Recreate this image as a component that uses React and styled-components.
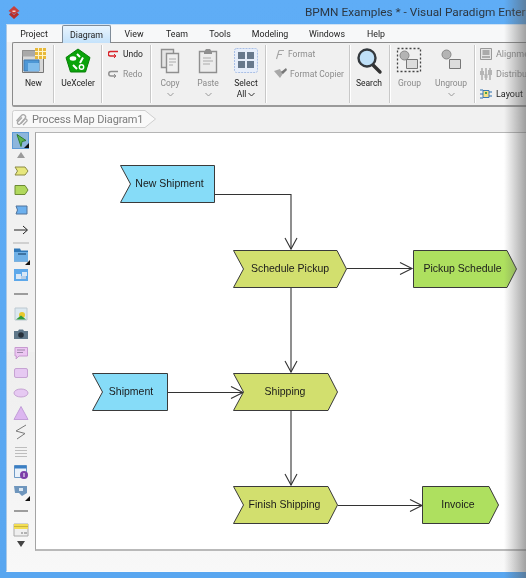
import React from "react";
import styled, { createGlobalStyle } from "styled-components";

const Global = createGlobalStyle`
  html, body { margin: 0; padding: 0; background: #5aa9f4; }
  * { box-sizing: border-box; }
`;

const Frame = styled.div`
  position: relative;
  width: 526px;
  height: 578px;
  overflow: hidden;
  display: flex;
  flex-direction: column;
  background: linear-gradient(#5fadf6, #58a6f0);
  font-family: Roboto, "Liberation Sans", sans-serif;
  filter: blur(0.3px);
`;
const TitleBar = styled.header`
  height: 24px;
  flex: none;
  display: flex;
  align-items: center;
  padding-left: 8px;
  svg { flex: none; }
`;
const Title = styled.h1`
  margin: 0 0 0 285px;
  flex: none;
  font: 400 11.8px Roboto, sans-serif;
  color: #2c3742;
  white-space: nowrap;
`;
const Window = styled.div`
  flex: 1;
  min-height: 0;
  margin: 0 0 6px 6px;
  display: flex;
  flex-direction: column;
  background: #f1f1f1;
  border-left: 1px solid #a9c9e8;
  border-bottom: 1px solid #fafafa;
  border-top: 1px solid #cfe2f4;
`;
const TabRow = styled.nav`
  height: 17px;
  flex: none;
  display: flex;
  background: #f7f8f9;
  padding-left: 5px;
  align-items: stretch;
`;
const Tab = styled.div`
  width: ${p => p.$w}px;
  flex: none;
  display: flex;
  align-items: center;
  justify-content: center;
  padding-right: ${p => p.$pr || 0}px;
  font-size: 8.8px;
  color: #222;
  position: relative;
  z-index: 1;
  ${p => p.$active && `
    background: linear-gradient(#e9f4fd, #c4e2fb);
    border: 1px solid #7f8c99;
    border-bottom: none;
    border-radius: 2px 2px 0 0;
    height: 18px;
  `}
`;
const Ribbon = styled.section`
  height: 65px;
  flex: none;
  margin-left: 5px;
  display: flex;
  padding: 2px 0 2px 0;
  background: #f0f0f0;
  border: 1px solid #8a8a8a;
  border-right: none;
  border-bottom: 2px solid #9a9a9a;
  border-radius: 2px 0 0 2px;
`;
const Group = styled.div`
  width: ${p => p.$w}px;
  flex: none;
  display: flex;
  padding-left: ${p => p.$pad || 0}px;
  border-right: ${p => (p.$last ? "none" : "1px solid #c8c8c8")};
  box-shadow: ${p => (p.$last ? "none" : "1px 0 0 #fff")};
  ${p => p.$column && "flex-direction: column; padding-top: 0;"}
`;
const LargeButton = styled.div`
  width: ${p => p.$w}px;
  flex: none;
  display: flex;
  flex-direction: column;
  align-items: center;
  font-size: 8.5px;
  line-height: 11px;
  color: ${p => (p.$off ? "#8a8a8a" : "#222")};
  padding-top: 2px;
  text-align: center;
  svg.big { display: block; flex: none; height: 29px; margin-bottom: 2px; }
`;
const Chevron = styled.svg`
  display: block;
  flex: none;
  width: 7px;
  height: 5px;
  margin: 3px auto 0;
`;
const InlineChevron = styled.svg`
  display: inline-block;
  width: 7px;
  height: 5px;
  margin-left: 2px;
  vertical-align: 0;
`;
const SmallButton = styled.div`
  height: 20px;
  flex: none;
  margin-top: ${p => (p.$first ? -1 : 0)}px;
  display: flex;
  align-items: center;
  gap: ${p => p.$gap || 4}px;
  font-size: 8.5px;
  color: ${p => (p.$off ? "#8c8c8c" : "#222")};
  white-space: nowrap;
  svg { flex: none; }
`;
const SideButton = styled(SmallButton)`
  gap: 4px;
  font-size: 9px;
`;
const CrumbRow = styled.div`
  height: 26px;
  flex: none;
  padding: 3px 0 0 5px;
`;
const Crumb = styled.div`
  position: relative;
  width: 145px;
  height: 18px;
  display: flex;
  align-items: center;
  gap: 4px;
  padding-left: 3px;
  font: 400 11px Roboto, sans-serif;
  letter-spacing: -0.15px;
  color: #7c7c7c;
  white-space: nowrap;
  svg.edge { position: absolute; left: 0; top: 0; }
  svg.clip, span { position: relative; }
`;
const Main = styled.div`
  flex: 1;
  min-height: 0;
  display: flex;
`;
const ToolBar = styled.aside`
  width: 28px;
  flex: none;
  padding: 0 0 0 5px;
  margin-top: -1px;
  display: flex;
  flex-direction: column;
`;
const Slot = styled.div`
  height: ${p => p.$h}px;
  width: 17px;
  flex: none;
  display: flex;
  align-items: center;
  justify-content: center;
  position: relative;
  svg { flex: none; }
  ${p => p.$on && `
    background: #8db6dc;
    border: 1px solid #5d9ad6;
  `}
`;
const Corner = styled.i`
  position: absolute;
  right: -1px;
  bottom: 0;
  width: 0;
  height: 0;
  border-style: solid;
  border-width: 0 0 5px 5px;
  border-color: transparent transparent #111 transparent;
`;
const Canvas = styled.main`
  position: relative;
  flex: 1;
  height: 419px;
  margin-top: -1px;
  background: #fff;
  border: 1px solid #b5b5b5;
  border-left-color: #a4a4a4;
  border-right: none;
  border-bottom: 2px solid #b9b9b9;
`;
const Wires = styled.svg`
  position: absolute;
  left: -36px;
  top: -133px;
  width: 526px;
  height: 578px;
  pointer-events: none;
`;
const Node = styled.div`
  position: absolute;
  left: ${p => p.$x - 36}px;
  top: ${p => p.$y - 133}px;
  width: ${p => p.$w}px;
  height: 38px;
  display: flex;
  align-items: center;
  justify-content: center;
  padding-left: ${p => (p.$dx > 0 ? p.$dx : 0)}px;
  padding-right: ${p => (p.$dx < 0 ? -p.$dx : 0)}px;
  padding-bottom: 2px;
  font: 400 10.5px "Liberation Sans", sans-serif;
  color: #1a1a1a;
  white-space: nowrap;
  svg { position: absolute; left: 0; top: 0; overflow: visible; }
  span { position: relative; }
`;
const StatusBar = styled.footer`
  flex: 1;
  background: linear-gradient(#eeeeee, #f8f8f8);
`;
const Fade = styled.div`
  position: absolute;
  right: 0;
  top: 0;
  bottom: 0;
  width: 22px;
  background: linear-gradient(90deg, rgba(90,90,90,0), rgba(90,90,90,.22) 40%, rgba(90,90,90,.55));
  pointer-events: none;
`;

const Big = ({ children }) => (
  <svg className="big" width="30" height="29" viewBox="0 0 30 29">{children}</svg>
);
const Down = ({ off }) => (
  <Chevron viewBox="0 0 7 5"><path d="M.5 1l3 3 3-3" fill="none" stroke={off ? "#999" : "#333"} strokeWidth="1" /></Chevron>
);

const Logo = () => (
  <svg width="12" height="13" viewBox="0 0 12 13">
    <path d="M6 0l5.500 5L6 8.500.5 5z" fill="#c9403c" />
    <path d="M3 6.500L6 9l3-2.500 2 2L6 13 1 8.500z" fill="#b52f2c" />
    <path d="M4.500 4.500h3v1.500h-3z" fill="#f6d0cc" />
  </svg>
);
const NewIcon = () => (
  <Big>
    <path d="M3.500 3.500h21v22h-21z" fill="#d8d8d8" stroke="#777" />
    <path d="M3.500 3.500h21v6h-21z" fill="#a9a9a9" />
    <path d="M5 13h15v11H5z" fill="#4d97d6" stroke="#4179ad" />
    <path d="M9 16h11v8H9z" fill="#7fbcec" />
    <path d="M16 1h11v11H16z" fill="#e8b93a" />
    <path d="M19.500 1v11M23.500 1v11M16 4.500h11M16 8.500h11" stroke="#fff4c9" />
  </Big>
);
const UeIcon = () => (
  <Big>
    <path d="M15 2l12 8.500-4.500 14.500h-15L3 10.500z" fill="#0aa30a" stroke="#087f08" />
    <ellipse cx="10" cy="11.500" rx="3.300" ry="2.200" fill="#fff" />
    <path d="M14 7l3 3M20 10.500l-3 5.500M10 18l4 4" stroke="#fff" strokeWidth="2" />
    <circle cx="18.500" cy="20" r="2.200" fill="none" stroke="#fff" strokeWidth="1.400" />
  </Big>
);
const CopyIcon = () => (
  <Big>
    <path d="M6.500 2.500h12v18h-12z" fill="#e4e4e4" stroke="#8f8f8f" strokeWidth="1.400" />
    <path d="M11.500 6.500h12v19h-12z" fill="#f0f0f0" stroke="#8f8f8f" strokeWidth="1.400" />
    <path d="M14 12h7M14 15h7M14 18h4" stroke="#aaa" />
  </Big>
);
const PasteIcon = () => (
  <Big>
    <path d="M6.500 4.500h17v21h-17z" fill="#ececec" stroke="#8f8f8f" strokeWidth="1.400" />
    <path d="M11 5l2-3h4l2 3v2h-8z" fill="#8f8f8f" />
    <path d="M10 11h8M10 14h10M10 17h7" stroke="#aaa" />
  </Big>
);
const SelectIcon = () => (
  <Big>
    <rect x="3.500" y="1.500" width="23" height="24" rx="2" fill="#e7eefa" stroke="#a9bfe6" strokeDasharray="2 1" />
    <path d="M7 5h7v7H7zM16 5h7v7h-7zM7 14h7v7H7zM16 14h7v7h-7z" fill="#68798c" />
  </Big>
);
const SearchIcon = () => (
  <Big>
    <path d="M19 18l7 7" stroke="#333" strokeWidth="3.400" strokeLinecap="round" />
    <circle cx="13" cy="11" r="8.500" fill="#bfe0f8" stroke="#34393e" strokeWidth="2.400" />
  </Big>
);
const GroupIcon = () => (
  <Big>
    <rect x="2.500" y="1.500" width="23" height="23" fill="none" stroke="#444" strokeWidth="1.300" strokeDasharray="2 2" />
    <circle cx="9.500" cy="8.500" r="4.500" fill="#b4b4b4" stroke="#888" />
    <path d="M11.500 12.500h11v9h-11z" fill="#dcdcdc" stroke="#777" />
  </Big>
);
const UngroupIcon = () => (
  <Big>
    <circle cx="10.500" cy="7.500" r="4.500" fill="#b4b4b4" stroke="#888" />
    <path d="M13.500 12.500h11v9h-11z" fill="#dcdcdc" stroke="#777" />
  </Big>
);
const Undo = () => (
  <svg width="11" height="10" viewBox="0 0 11 10"><path d="M10 2.500H2.500a2.200 2.200 0 0 0 0 4.500H8" fill="none" stroke="#d8232a" strokeWidth="1.500" /><path d="M8 7L6 5M8 7L6 9" stroke="#d8232a" fill="none" /></svg>
);
const Redo = () => (
  <svg width="11" height="10" viewBox="0 0 11 10"><path d="M10 2.500H3A2.200 2.200 0 0 0 3 7h5" fill="none" stroke="#909090" strokeWidth="1.500" /><path d="M8 7L6 5M8 7L6 9" stroke="#909090" fill="none" /></svg>
);
const FormatIc = () => (
  <svg width="12" height="11" viewBox="0 0 12 11"><path d="M6 1.500h5M6 1.500L3.500 10M5 5.500h4" fill="none" stroke="#a5a5a5" strokeWidth="1.100" /></svg>
);
const CopierIc = () => (
  <svg width="15" height="12" viewBox="0 0 15 12"><path d="M1 3l6 7 4-6-3-1-1-2z" fill="#a8a8a8" /><path d="M8 4l5-4 1 2-4 4z" fill="#777" /></svg>
);
const AlignIc = () => (
  <svg width="12" height="12" viewBox="0 0 12 12"><path d="M.5.500h11v11H.5z" fill="#e4e4e4" stroke="#999" /><path d="M2.500 2h7v5h-7z" fill="#aaa" /><path d="M2 9h8" stroke="#777" /></svg>
);
const DistIc = () => (
  <svg width="12" height="12" viewBox="0 0 12 12"><path d="M2 0v12M6 0v12M10 0v12" stroke="#8a8a8a" /><path d="M0 3h4v4H0zM4.500 6h3v4h-3zM8 2h4v5H8z" fill="#b5b5b5" /></svg>
);
const LayoutIc = () => (
  <svg width="12" height="12" viewBox="0 0 12 12"><path d="M3 2.500h6v7H3z" fill="#f5e083" stroke="#3b78b5" /><path d="M0 2h3M0 6h3M0 10h3M9 4h3M9 8h3" stroke="#2d6fad" /><path d="M5 4h2v2H5z" fill="#4aa04a" /></svg>
);
const Clip = () => (
  <svg className="clip" width="13" height="13" viewBox="0 0 13 13" fill="none" stroke="#a8a8a8" strokeWidth="1.300"><path d="M1.500 8l5-5.500a2.300 2.300 0 0 1 3.500 3L5 11a1.600 1.600 0 0 1-2.400-2L7 4.500" /><path d="M6 10.500l4-4.500a1.600 1.600 0 0 1 2 2l-4 4" /></svg>
);

const tools = [
  ["sel", 17], ["up", 13], ["yellow", 18], ["green", 20], ["blue", 20], ["arrow", 20], ["sep", 5], ["folder", 20], ["pool", 19], ["line", 20], ["image", 20], ["camera", 19],
  ["comment", 20], ["rect", 19], ["ellipse", 21], ["tri", 19], ["zig", 20], ["lines", 20], ["info", 19], ["callout", 20], ["line", 20], ["note", 18], ["down", 12],
];
const ToolIcon = ({ kind }) => {
  const g = {
    sel: <path d="M4 1.500l9 6-4 1-1 5z" fill="#5fb552" stroke="#2e7d32" />,
    up: <path d="M8 4l4 6H4z" fill="#9a9a9a" />,
    yellow: <path d="M2 4h10l3 4-3 4H2l2.500-4z" fill="#e7e77c" stroke="#8b8b45" />,
    green: <path d="M2 3.500h10l3 4.500-3 4.500H2z" fill="#b1d85c" stroke="#6c8a35" />,
    blue: <path d="M3 4h11v8H3l1.500-4z" fill="#6cb0ee" stroke="#50739a" />,
    arrow: <g fill="none" stroke="#222"><path d="M1 8h13" /><path d="M10 4l4.500 4-4.500 4" /></g>,
    sep: <path d="M0 8h16" stroke="#c4c4c4" strokeWidth="1.500" />,
    folder: <g><path d="M1 1.500h6l1 2h7v11H1z" fill="#2f78b8" /><path d="M1 5h14v9.500H1z" fill="#6fb0e6" /><path d="M5 7h8" stroke="#24527c" strokeWidth="1.300" /></g>,
    pool: <g><path d="M1 2h14v12H1z" fill="#5da8ea" /><path d="M3 7h5v5H3zM9 5h5v4H9z" fill="#d8e7f6" /><path d="M8 9h5v3H8z" fill="#b7cee6" /></g>,
    line: <path d="M1 8h14" stroke="#777" strokeWidth="1.400" />,
    image: <g><path d="M2 2h12v12H2z" fill="#dce8f0" stroke="#bcc8d0" /><circle cx="9" cy="9" r="3" fill="#e8c82e" /><path d="M3 13.500l5-4 5 4z" fill="#2f9a3c" /></g>,
    camera: <g><path d="M1 5h4l1-1.500h4L11 5h4v8H1z" fill="#5f7789" /><circle cx="8" cy="9" r="2.800" fill="#26303a" /></g>,
    comment: <g><path d="M2 2.500h12.500v8.500H6l-3 3 .5-3H2z" fill="#ecc6f2" stroke="#c79ad0" /><path d="M4 5h8M4 7.500h6" stroke="#9c88a8" /></g>,
    rect: <rect x="1.500" y="3.500" width="13" height="9" rx="1.500" fill="#e6c9f2" stroke="#c6a3d3" />,
    ellipse: <ellipse cx="8" cy="8" rx="7" ry="4" fill="#e6c9f2" stroke="#c6a3d3" />,
    tri: <path d="M8 1.500l7 13H1z" fill="#dcb6f0" stroke="#c29ed8" />,
    zig: <path d="M13 1L3 7l9 2.500L4 15" fill="none" stroke="#7b7b7b" />,
    lines: <path d="M2 3.500h12M2 6.500h12M2 9.500h12M2 12.500h12" stroke="#bdbdbd" />,
    info: <g><path d="M1.500 1.500h12v12h-12z" fill="#e9f1fa" stroke="#6f9ac6" /><path d="M1.500 1.500h12v3h-12z" fill="#3a7fc4" /><circle cx="11" cy="11" r="4" fill="#7b3fa8" /><path d="M11 9v4" stroke="#fff" /></g>,
    callout: <g><path d="M1 3h13v7l-5 3-3-3H2z" fill="#6f96bd" /><path d="M6 5h4v3H6z" fill="#dbe8f4" /></g>,
    note: <g><path d="M1 2h14v12H1z" fill="#efefef" stroke="#aaa" /><path d="M1 2h14v5H1z" fill="#f2dd55" /><path d="M1 4.500h14" stroke="#c9b53a" /><path d="M8 11h2M11 11h3" stroke="#777" /></g>,
    down: <path d="M4 4h8l-4 6z" fill="#444" />,
  }[kind];
  return <svg width="16" height="16" viewBox="0 0 16 16">{g}</svg>;
};

const nodes = [
  { x: 120, y: 165, w: 95, text: "New Shipment", fill: "#86dcf8", dx: 4, d: "M.5.500H94.500V37.500H.5L10.500 19z" },
  { x: 92, y: 373, w: 76, text: "Shipment", fill: "#86dcf8", dx: 2, d: "M.5.500H75.500V37.500H.5L10.500 19z" },
  { x: 233, y: 250, w: 114, text: "Schedule Pickup", fill: "#d2df6e", d: "M.5.500H104L113.500 19 104 37.500H.5L10.500 19z" },
  { x: 233, y: 373, w: 105, text: "Shipping", fill: "#d2df6e", dx: -1, d: "M.5.500H95L104.500 19 95 37.500H.5L10.500 19z" },
  { x: 233, y: 486, w: 105, text: "Finish Shipping", fill: "#d2df6e", dx: -2, d: "M.5.500H95L104.500 19 95 37.500H.5L10.500 19z" },
  { x: 413, y: 250, w: 104, text: "Pickup Schedule", fill: "#aee05f", dx: -5, d: "M.5.500H94L103.500 19 94 37.500H.5z" },
  { x: 422, y: 486, w: 77, text: "Invoice", fill: "#aee05f", dx: -5, d: "M.5.500H67L76.500 19 67 37.500H.5z" },
];
const wires = [
  { d: "M215 194.500H291V249", tip: [291, 249, "v"] },
  { d: "M347 268.500H412", tip: [412, 268.500, "h"] },
  { d: "M291 288V372", tip: [291, 372, "v"] },
  { d: "M168 392.500H243", tip: [243, 392.500, "h"] },
  { d: "M291 411V485", tip: [291, 485, "v"] },
  { d: "M338 505.500H422", tip: [422, 505.500, "h"] },
];
const tipPath = ([x, y, dir]) =>
  dir === "v" ? `M${x - 6} ${y - 11}L${x} ${y}L${x + 6} ${y - 11}` : `M${x - 12} ${y - 6}L${x} ${y}L${x - 12} ${y + 6}`;

export default function App() {
  return (
    <Frame>
      <Global />
      <TitleBar>
        <Logo />
        <Title>BPMN Examples * - Visual Paradigm Enterp</Title>
      </TitleBar>
      <Window>
        <TabRow>
          <Tab $w={50} $pr={6}>Project</Tab>
          <Tab $w={49} $active>Diagram</Tab>
          <Tab $w={46}>View</Tab>
          <Tab $w={40}>Team</Tab>
          <Tab $w={46}>Tools</Tab>
          <Tab $w={54}>Modeling</Tab>
          <Tab $w={60}>Windows</Tab>
          <Tab $w={38}>Help</Tab>
        </TabRow>
        <Ribbon>
          <Group $w={41}><LargeButton $w={41}><NewIcon />New</LargeButton></Group>
          <Group $w={48}><LargeButton $w={48}><UeIcon />UeXceler</LargeButton></Group>
          <Group $w={49} $column $pad={6}>
            <SmallButton $first><Undo />Undo</SmallButton>
            <SmallButton $off><Redo />Redo</SmallButton>
          </Group>
          <Group $w={115}>
            <LargeButton $w={38} $off><CopyIcon />Copy<Down off /></LargeButton>
            <LargeButton $w={38} $off><PasteIcon />Paste<Down off /></LargeButton>
            <LargeButton $w={38}><SelectIcon />Select<span>All<InlineChevron viewBox="0 0 7 5"><path d="M.5 1l3 3 3-3" fill="none" stroke="#333" /></InlineChevron></span></LargeButton>
          </Group>
          <Group $w={84} $column $pad={7}>
            <SmallButton $first $off $gap={3}><FormatIc />Format</SmallButton>
            <SmallButton $off $gap={2}><CopierIc />Format Copier</SmallButton>
          </Group>
          <Group $w={40}><LargeButton $w={38}><SearchIcon />Search</LargeButton></Group>
          <Group $w={85}>
            <LargeButton $w={39} $off><GroupIcon />Group</LargeButton>
            <LargeButton $w={44} $off><UngroupIcon />Ungroup<Down off /></LargeButton>
          </Group>
          <Group $w={50} $column $pad={5} $last>
            <SideButton $first $off><AlignIc />Alignme</SideButton>
            <SideButton $off><DistIc />Distribu</SideButton>
            <SideButton><LayoutIc />Layout</SideButton>
          </Group>
        </Ribbon>
        <CrumbRow>
          <Crumb>
            <svg className="edge" width="145" height="18" viewBox="0 0 145 18">
              <path d="M.5 2.500Q.5.500 2.500.500H133L143.500 9 133 17.500H.5z" fill="#f9f9f9" stroke="#cfcfcf" />
            </svg>
            <Clip />
            <span>Process Map Diagram1</span>
          </Crumb>
        </CrumbRow>
        <Main>
          <ToolBar>
            {tools.map(([k, h], i) => (
              <Slot key={i} $h={h} $on={k === "sel"}>
                <ToolIcon kind={k} />
                {(k === "sel" || k === "folder" || k === "callout") && <Corner />}
              </Slot>
            ))}
          </ToolBar>
          <Canvas>
            <Wires viewBox="0 0 526 578">
              {wires.map((w, i) => (
                <g key={i} fill="none" stroke="#333" strokeWidth="1.100">
                  <path d={w.d} />
                  <path d={tipPath(w.tip)} />
                </g>
              ))}
            </Wires>
            {nodes.map(n => (
              <Node key={n.text} $x={n.x} $y={n.y} $w={n.w} $dx={n.dx || 0}>
                <svg width={n.w} height="38" viewBox={`0 0 ${n.w} 38`}>
                  <path d={n.d} fill={n.fill} stroke="#3a3a3a" strokeWidth="1" />
                </svg>
                <span>{n.text}</span>
              </Node>
            ))}
          </Canvas>
        </Main>
        <StatusBar />
      </Window>
      <Fade />
    </Frame>
  );
}
